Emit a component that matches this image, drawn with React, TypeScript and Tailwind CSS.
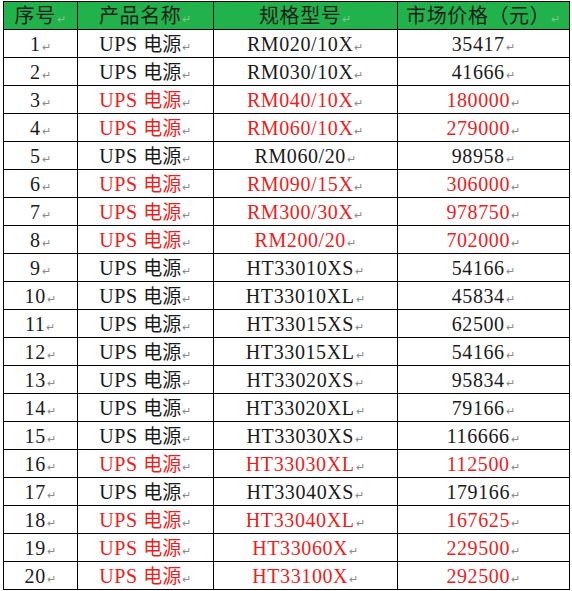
const rows: [string, string, boolean][] = [
  ["RM020/10X", "35417", false],
  ["RM030/10X", "41666", false],
  ["RM040/10X", "180000", true],
  ["RM060/10X", "279000", true],
  ["RM060/20", "98958", false],
  ["RM090/15X", "306000", true],
  ["RM300/30X", "978750", true],
  ["RM200/20", "702000", true],
  ["HT33010XS", "54166", false],
  ["HT33010XL", "45834", false],
  ["HT33015XS", "62500", false],
  ["HT33015XL", "54166", false],
  ["HT33020XS", "95834", false],
  ["HT33020XL", "79166", false],
  ["HT33030XS", "116666", false],
  ["HT33030XL", "112500", true],
  ["HT33040XS", "179166", false],
  ["HT33040XL", "167625", true],
  ["HT33060X", "229500", true],
  ["HT33100X", "292500", true],
];

const font = { fontFamily: '"Liberation Serif", "Noto Sans CJK SC", serif' };

function Mark({ light }: { light?: boolean }) {
  return <span className={`ml-[1px] text-[11px] ${light ? "text-[#7fc98f]" : "text-[#8a8a8a]"}`}>↵</span>;
}

function Head({ children }: { children: string }) {
  return (
    <th className="h-[28px] border border-black bg-[#22b24c] p-0 pt-[2px] text-center font-normal leading-[20px] text-[#1e1e1e]">
      <span className="text-[20px]" style={{ fontFamily: '"Noto Sans CJK SC", sans-serif' }}>{children}</span>
      <Mark light />
    </th>
  );
}

const cell = "h-[28px] border border-black p-0 pt-[3px] text-center leading-[20px]";

export default function App() {
  return (
    <div className="min-h-[591px] w-[572px] bg-white pl-[3px] pt-[1px]">
      <table className="w-[566px] table-fixed border-collapse text-[20px] tracking-[0.6px]" style={font}>
        <colgroup>
          <col className="w-[74px]" />
          <col className="w-[136px]" />
          <col className="w-[184px]" />
          <col className="w-[172px]" />
        </colgroup>
        <thead>
          <tr>
            <Head>序号</Head>
            <Head>产品名称</Head>
            <Head>规格型号</Head>
            <Head>市场价格（元）</Head>
          </tr>
        </thead>
        <tbody>
          {rows.map(([model, price, red], i) => {
            const color = red ? "text-[#ee1c1c]" : "text-[#1a1a1a]";
            return (
              <tr key={i}>
                <td className={`${cell} text-[#1a1a1a]`}>
                  {i + 1}
                  <Mark />
                </td>
                <td className={`${cell} ${color}`}>
                  UPS <span className="text-[19px] tracking-normal">电源</span>
                  <Mark />
                </td>
                <td className={`${cell} ${color}`}>
                  {model}
                  <Mark />
                </td>
                <td className={`${cell} ${color}`}>
                  {price}
                  <Mark />
                </td>
              </tr>
            );
          })}
        </tbody>
      </table>
    </div>
  );
}
